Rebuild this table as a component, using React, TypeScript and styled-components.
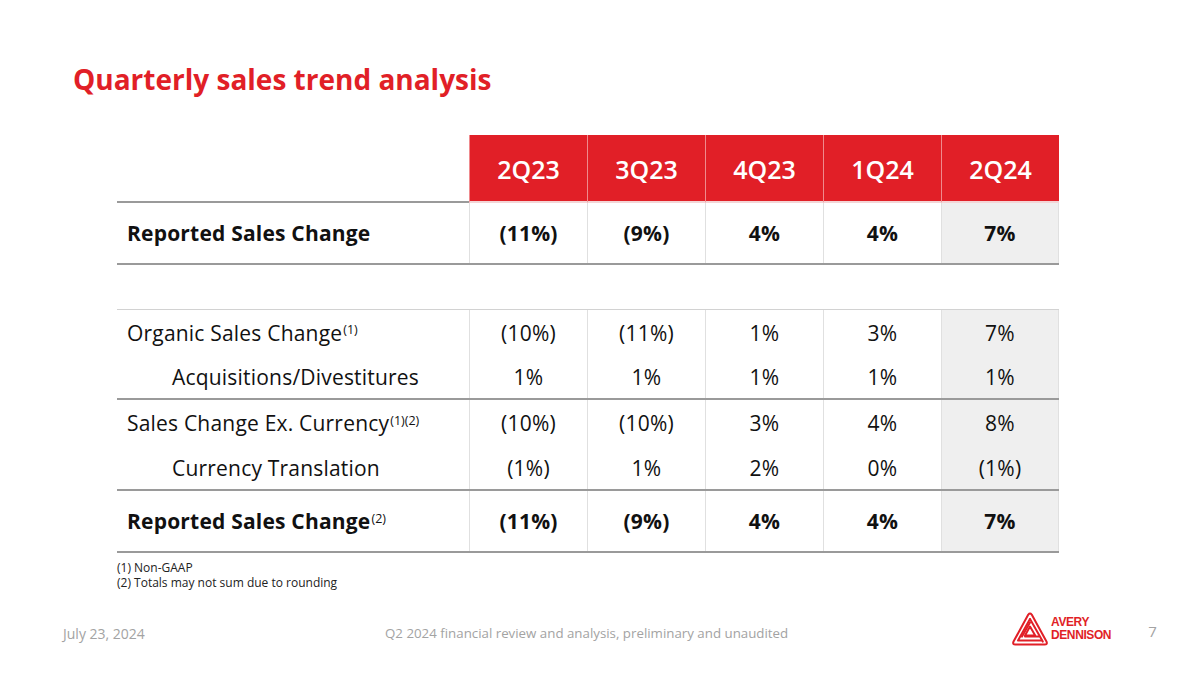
import React from "react";
import styled, { createGlobalStyle } from "styled-components";

const GlobalStyle = createGlobalStyle`
  html, body { margin: 0; padding: 0; background: #ffffff; }
  body { font-family: "Open Sans", "Noto Sans", "Liberation Sans", sans-serif; color: #111; }
`;

const RED = "#E11F27";

const Page = styled.div`
  width: 1200px;
  height: 675px;
  box-sizing: border-box;
  display: flex;
  flex-direction: column;
  padding: 61px 0 0 0;
  overflow: hidden;
`;

const Title = styled.h1`
  margin: 0 0 0 73px;
  font-size: 28px;
  line-height: 36px;
  font-weight: 700;
  color: ${RED};
`;

const Table = styled.div`
  margin: 38px 0 0 117px;
  width: 942px;
  display: flex;
  flex-direction: column;
`;

const Row = styled.div<{ $h: number; $line?: "heavy" | "light" | "none" }>`
  display: grid;
  grid-template-columns: 352px repeat(5, 118px);
  height: ${(p) => p.$h}px;
  box-sizing: border-box;
  border-bottom: ${(p) =>
    p.$line === "heavy" ? "2px solid #9a9a9a" : p.$line === "light" ? "1px solid #cfcfcf" : "none"};
`;

const Spacer = styled.div<{ $h: number }>`
  height: ${(p) => p.$h}px;
  box-sizing: border-box;
  border-bottom: 1px solid #d2d2d2;
`;

const HeadCell = styled.div<{ $empty?: boolean }>`
  background: ${(p) => (p.$empty ? "transparent" : RED)};
  color: #fff;
  font-size: 25px;
  font-weight: 600;
  display: flex;
  align-items: center;
  justify-content: center;
  padding-top: 2px;
  box-sizing: border-box;
  border-left: ${(p) => (p.$empty ? "none" : "1px solid #ef8a8d")};
  border-bottom: ${(p) => (p.$empty ? "2px solid #9a9a9a" : "2px solid #f3d5d6")};
`;

const LabelCell = styled.div<{ $bold?: boolean; $indent?: boolean }>`
  display: flex;
  align-items: center;
  padding-left: ${(p) => (p.$indent ? 55 : 10)}px;
  font-size: 21px;
  letter-spacing: 0.2px;
  font-weight: ${(p) => (p.$bold ? 700 : 400)};
  white-space: nowrap;
`;

const ValueCell = styled.div<{ $bold?: boolean; $shade?: boolean }>`
  display: flex;
  align-items: center;
  justify-content: center;
  font-size: 21px;
  letter-spacing: 0.2px;
  font-weight: ${(p) => (p.$bold ? 700 : 400)};
  border-left: 1px solid #e0e0e0;
  background: ${(p) => (p.$shade ? "#efefef" : "transparent")};
  border-right: ${(p) => (p.$shade ? "1px solid #e0e0e0" : "none")};
`;

const Sup = styled.sup`
  font-size: 12.5px;
  font-weight: 400;
  letter-spacing: 0;
  position: relative;
  top: -3px;
  margin-left: 1px;
`;

const Notes = styled.div`
  margin: 7px 0 0 117px;
  font-size: 12px;
  line-height: 15px;
  color: #222;
`;

const Footer = styled.div`
  margin-top: auto;
  height: 51px;
  display: grid;
  grid-template-columns: 385px 402px 1fr;
  align-items: start;
  font-size: 14px;
  color: #a3a3a3;
`;

const FootDate = styled.div`
  padding-left: 63px;
`;

const FootCenter = styled.div`
  text-align: center;
  white-space: nowrap;
  font-size: 13.3px;
  line-height: 19px;
`;

const FootRight = styled.div`
  display: flex;
  align-items: flex-start;
  padding-left: 225px;
`;

const Logo = styled.div`
  display: flex;
  align-items: center;
  gap: 3px;
  margin-top: -12px;
`;

const LogoText = styled.div`
  color: ${RED};
  font-family: "Liberation Sans", Arial, sans-serif;
  font-weight: 700;
  font-size: 12px;
  line-height: 13px;
  letter-spacing: -0.4px;
`;

const PageNum = styled.div`
  margin-left: 37px;
  font-size: 15px;
  margin-top: -3px;
`;

type R = { label: string; sup?: string; vals: string[]; bold?: boolean; indent?: boolean };

const cols = ["2Q23", "3Q23", "4Q23", "1Q24", "2Q24"];

const renderRow = (r: R, h: number, line?: "heavy" | "light" | "none") => (
  <Row $h={h} $line={line} key={r.label + h}>
    <LabelCell $bold={r.bold} $indent={r.indent}>
      {r.label}
      {r.sup && <Sup>{r.sup}</Sup>}
    </LabelCell>
    {r.vals.map((v, i) => (
      <ValueCell key={i} $bold={r.bold} $shade={i === 4}>
        {v}
      </ValueCell>
    ))}
  </Row>
);

const LogoMark = () => (
  <svg width="36" height="34" viewBox="0 0 36 34" fill="none" stroke={RED} strokeWidth="2" strokeLinejoin="round" strokeLinecap="round">
    <path d="M16.3 2.6 Q18 0.5 19.7 2.6 L34.6 29.8 Q35.6 32.6 32.6 32.6 L3.4 32.6 Q0.4 32.6 1.4 29.8 Z" />
    <path d="M18 7 L6 28.6 L29.5 28.6" />
    <path d="M18 7 L30.8 29.6" />
    <path d="M13 23.5 L18 14.5 L23.2 23.5 Z" />
    <path d="M10 24.6 L18 10.5" />
    <path d="M26.8 24.6 L13 24.6" />
  </svg>
);

export default function App() {
  const reported: R = { label: "Reported Sales Change", vals: ["(11%)", "(9%)", "4%", "4%", "7%"], bold: true };
  return (
    <>
      <GlobalStyle />
      <Page>
        <Title>Quarterly sales trend analysis</Title>
        <Table>
          <Row $h={68}>
            <HeadCell $empty />
            {cols.map((c) => (
              <HeadCell key={c}>{c}</HeadCell>
            ))}
          </Row>
          {renderRow(reported, 62, "heavy")}
          <Spacer $h={45} />
          {renderRow({ label: "Organic Sales Change", sup: "(1)", vals: ["(10%)", "(11%)", "1%", "3%", "7%"] }, 45)}
          {renderRow({ label: "Acquisitions/Divestitures", indent: true, vals: ["1%", "1%", "1%", "1%", "1%"] }, 45, "heavy")}
          {renderRow({ label: "Sales Change Ex. Currency", sup: "(1)(2)", vals: ["(10%)", "(10%)", "3%", "4%", "8%"] }, 46)}
          {renderRow({ label: "Currency Translation", indent: true, vals: ["(1%)", "1%", "2%", "0%", "(1%)"] }, 45, "heavy")}
          {renderRow({ ...reported, sup: "(2)" }, 62, "heavy")}
        </Table>
        <Notes>
          <div>(1) Non-GAAP</div>
          <div>(2) Totals may not sum due to rounding</div>
        </Notes>
        <Footer>
          <FootDate>July 23, 2024</FootDate>
          <FootCenter>Q2 2024 financial review and analysis, preliminary and unaudited</FootCenter>
          <FootRight>
            <Logo>
              <LogoMark />
              <LogoText>
                AVERY
                <br />
                DENNISON
              </LogoText>
            </Logo>
            <PageNum>7</PageNum>
          </FootRight>
        </Footer>
      </Page>
    </>
  );
}
